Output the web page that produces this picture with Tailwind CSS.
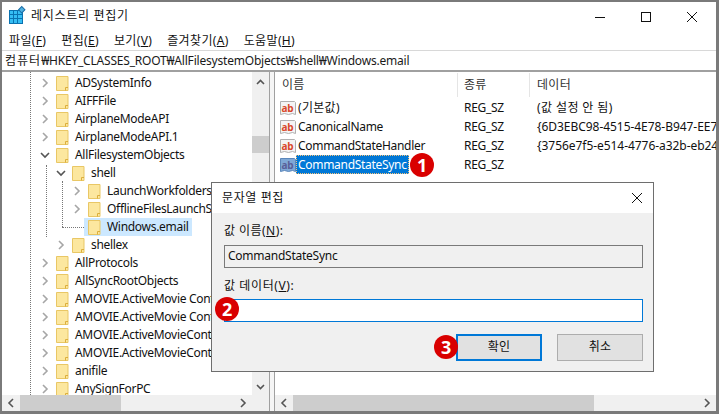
<!DOCTYPE html>
<html lang="ko">
<head>
<meta charset="UTF-8">
<title>레지스트리 편집기</title>
<script src="https://cdn.jsdelivr.net/npm/@tailwindcss/browser@4"></script>
</head>
<body class="bg-white overflow-hidden font-['Noto_Sans','Noto_Sans_CJK_KR',sans-serif] text-[12px] leading-none text-[#111] tracking-[-0.3px]">
<div class="relative w-[719px] h-[414px] overflow-hidden">
  <!-- main window -->
  <div class="flex flex-col w-[719px] h-[414px] border-2 border-b-[3px] border-r-[3px] border-[#7a7a7a] bg-white">
    <!-- title bar -->
    <div class="flex items-center h-[28px] shrink-0">
      <svg class="ml-[7px] w-[16px] h-[16px] overflow-visible" viewBox="0 0 16 16">
        <rect x=".5" y="2.5" width="13" height="13" fill="#35bdf3" stroke="#0a72b0"/>
        <path d="M.5 6.5h13M.5 10.5h13M4.5 2.5v13M8.5 2.5v13" stroke="#0a72b0"/>
        <rect x="10.5" y="-.5" width="4.5" height="4.5" fill="#4fb0e0" stroke="#1b6ea6" transform="rotate(45 12.75 1.75)"/>
      </svg>
      <span class="ml-[6px] text-[12px] tracking-[0.7px]">레지스트리 편집기</span>
      <div class="ml-auto mr-[1px] flex items-center">
        <svg class="w-[46px] h-[28px]" viewBox="0 0 46 28"><path d="M18 15.5h10" stroke="#111"/></svg>
        <svg class="w-[46px] h-[28px]" viewBox="0 0 46 28"><rect x="18.5" y="10.5" width="9" height="9" fill="none" stroke="#111"/></svg>
        <svg class="w-[46px] h-[28px]" viewBox="0 0 46 28"><path d="M18 10l10 10M28 10l-10 10" stroke="#111" fill="none"/></svg>
      </div>
    </div>
    <!-- menu -->
    <div class="flex items-center h-[20px] shrink-0 pl-[7px] pt-[2px] gap-[15px] text-[12px] tracking-[0.35px]">
      <span>파일(<u>F</u>)</span><span>편집(<u>E</u>)</span><span>보기(<u>V</u>)</span><span>즐겨찾기(<u>A</u>)</span><span>도움말(<u>H</u>)</span>
    </div>
    <!-- address bar -->
    <div class="flex items-center h-[22px] shrink-0 pl-[3px] pt-[1px] border-t border-t-[#d8d8d8] border-b-2 border-b-[#a0a0a0] text-[12px] text-[#1a1a1a]"><span class="tracking-[1px]">컴퓨터</span><span class="tracking-[-0.2px]">₩HKEY_CLASSES_ROOT₩AllFilesystemObjects₩shell₩Windows.email</span></div>
    <!-- panes -->
    <div class="flex flex-1 min-h-0">
      <!-- tree pane -->
      <div class="relative flex flex-col w-[267px] shrink-0">
        <div class="flex flex-1 min-h-0">
          <div id="tree" class="relative flex-1 overflow-hidden pt-[2px]"></div>
          <div class="flex flex-col items-center w-[17px] bg-[#f0f0f0]">
            <svg class="w-[17px] h-[17px] mt-[2px]" viewBox="0 0 17 17"><path d="M5 10l3.5-3.5L12 10" fill="none" stroke="#555" stroke-width="1.6"/></svg>
            <div class="w-full h-[17px] mt-[45px] bg-[#cdcdcd]"></div>
            <svg class="w-[17px] h-[17px] mt-auto" viewBox="0 0 17 17"><path d="M5 7l3.5 3.5L12 7" fill="none" stroke="#555" stroke-width="1.6"/></svg>
          </div>
        </div>
        <div class="flex items-center h-[16px] shrink-0 bg-[#f0f0f0]">
          <svg class="w-[18px] h-[16px]" viewBox="0 0 18 16"><path d="M11 4l-4 4 4 4" fill="none" stroke="#555" stroke-width="1.6"/></svg>
          <div class="w-[101px] h-full bg-[#cdcdcd]"></div>
          <svg class="w-[18px] h-[16px] ml-[113px]" viewBox="0 0 18 16"><path d="M7 4l4 4-4 4" fill="none" stroke="#555" stroke-width="1.6"/></svg>
        </div>
      </div>
      <!-- splitter -->
      <div class="w-[6px] shrink-0 bg-[#f5f5f5] border-x border-[#a0a0a0]"></div>
      <!-- list pane -->
      <div class="flex flex-col flex-1 min-w-0">
        <div class="flex flex-1 flex-col min-h-0 overflow-hidden">
          <div class="flex items-center h-[26px] shrink-0 text-[#333] tracking-[0.3px]">
            <div class="w-[183px] shrink-0 pl-[7px] h-[24px] flex items-center border-r border-[#e5e5e5]">이름</div>
            <div class="w-[72px] shrink-0 pl-[6px] h-[24px] flex items-center border-r border-[#e5e5e5]">종류</div>
            <div class="pl-[7px]">데이터</div>
          </div>
          <div id="list"></div>
        </div>
        <div class="flex items-center h-[16px] shrink-0 bg-[#f0f0f0]">
          <svg class="w-[18px] h-[16px]" viewBox="0 0 18 16"><path d="M11 4l-4 4 4 4" fill="none" stroke="#555" stroke-width="1.6"/></svg>
          <div class="w-[301px] h-full bg-[#cdcdcd]"></div>
          <svg class="w-[18px] h-[16px] ml-auto" viewBox="0 0 18 16"><path d="M7 4l4 4-4 4" fill="none" stroke="#555" stroke-width="1.6"/></svg>
        </div>
      </div>
    </div>
  </div>

  <!-- string edit dialog -->
  <div class="absolute left-[211px] top-[182px] w-[443px] h-[190px] flex flex-col border border-[#6e6e6e] bg-[#f0f0f0]">
    <div class="flex items-center justify-between h-[30px] shrink-0 bg-white pl-[10px] pr-[10px]">
      <span class="tracking-[0.6px]">문자열 편집</span>
      <svg class="w-[12px] h-[12px]" viewBox="0 0 12 12"><path d="M1 1l10 10M11 1L1 11" stroke="#111" fill="none"/></svg>
    </div>
    <div class="flex flex-col flex-1 pl-[12px] pr-[10px]">
      <div class="mt-[11px] h-[14px] flex items-center tracking-[0.45px]">값 이름(<u>N</u>):</div>
      <div class="mt-[7px] h-[23px] flex items-center pl-[3px] pb-[2px] border border-[#7a7a7a] tracking-[-0.25px]">CommandStateSync</div>
      <div class="mt-[11px] h-[14px] flex items-center tracking-[0.6px]">값 데이터(<u>V</u>):</div>
      <div class="mt-[6px] h-[23px] border border-[#0078d7] bg-white"></div>
      <div class="flex justify-end gap-[15px] mt-[12px]">
        <button class="w-[86px] h-[27px] pb-[2px] border-2 border-[#0078d7] bg-[#e1e1e1] tracking-[0.3px]">확인</button>
        <button class="w-[86px] h-[27px] pb-[2px] border border-[#adadad] bg-[#e1e1e1] tracking-[0.3px]">취소</button>
      </div>
    </div>
  </div>

  <!-- step badges -->
  <div class="absolute left-[410px] top-[153px] w-[24px] h-[24px] rounded-full bg-[#d90000] text-white font-bold text-[18px] flex items-center justify-center">1</div>
  <div class="absolute left-[215px] top-[297px] w-[24px] h-[24px] rounded-full bg-[#d90000] text-white font-bold text-[18px] flex items-center justify-center">2</div>
  <div class="absolute left-[434px] top-[335px] w-[24px] h-[24px] rounded-full bg-[#d90000] text-white font-bold text-[18px] flex items-center justify-center">3</div>
</div>

<script>
  // tree rows: [label, level, chevron]
  var treeRows = [
    ['ADSystemInfo', 0, 'right'], ['AIFFFile', 0, 'right'], ['AirplaneModeAPI', 0, 'right'],
    ['AirplaneModeAPI.1', 0, 'right'], ['AllFilesystemObjects', 0, 'down'], ['shell', 1, 'down'],
    ['LaunchWorkfolders', 2, 'right'], ['OfflineFilesLaunchS', 2, 'right'], ['Windows.email', 2, ''],
    ['shellex', 1, 'right'], ['AllProtocols', 0, 'right'], ['AllSyncRootObjects', 0, 'right'],
    ['AMOVIE.ActiveMovie Control', 0, 'right'], ['AMOVIE.ActiveMovie Control', 0, 'right'],
    ['AMOVIE.ActiveMovieControl', 0, 'right'], ['AMOVIE.ActiveMovieControl', 0, 'right'],
    ['anifile', 0, 'right'], ['AnySignForPC', 0, 'right']
  ];
  var levelPad = ['pl-[38px]', 'pl-[54px]', 'pl-[70px]'];
  var folder = '<svg class="w-[13px] h-[15px] shrink-0" viewBox="0 0 13 15"><path d="M.5 .5h11.5v14H.5z" fill="#fce79f" stroke="#e9c765"/><path d="M9.5 14.5v-3h2.5" fill="none" stroke="#dcae3c"/></svg>';
  var chevrons = {
    right: '<svg class="w-[10px] h-[10px]" viewBox="0 0 10 10"><path d="M3 1l4 4-4 4" fill="none" stroke="#a6a6a6" stroke-width="1.6"/></svg>',
    down: '<svg class="w-[10px] h-[10px]" viewBox="0 0 10 10"><path d="M1 3l4 4 4-4" fill="none" stroke="#555" stroke-width="1.6"/></svg>',
    '': '<span class="w-[10px]"></span>'
  };
  var tree = document.getElementById('tree');
  var html = '<div class="absolute left-[28px] top-0 bottom-0 border-l border-dotted border-[#777]"></div>'
    + '<div class="absolute left-[44px] top-[93px] h-[72px] border-l border-dotted border-[#777]"></div>'
    + '<div class="absolute left-[60px] top-[109px] h-[46px] border-l border-dotted border-[#777]"></div>'
    + '<div class="absolute left-[60px] top-[155px] w-[22px] border-t border-dotted border-[#777]"></div>';
  treeRows.forEach(function(row) {
    var selected = row[0] === 'Windows.email';
    html += '<div class="relative flex items-center h-[18px] ' + levelPad[row[1]] + '">'
      + '<span class="flex justify-center w-[10px] mr-[2px] ' + (row[2] ? 'bg-white' : '') + '">' + chevrons[row[2]] + '</span>'
      + '<span class="flex items-center h-[18px] pl-[4px] pr-[4px] whitespace-nowrap ' + (selected ? 'bg-[#cce8ff]' : 'bg-white') + '">' + folder
      + '<span class="ml-[6px]">' + row[0] + '</span></span></div>';
  });
  tree.innerHTML = html;

  // list rows: [name, data, selected]
  var listRows = [
    ['<span class="tracking-[0.3px]">(기본값)</span>', '<span class="tracking-[0.4px]">(값 설정 안 됨)</span>', false],
    ['CanonicalName', '{6D3EBC98-4515-4E78-B947-EE7', false],
    ['CommandStateHandler', '{3756e7f5-e514-4776-a32b-eb24', false],
    ['CommandStateSync', '', true]
  ];
  var listHtml = '';
  listRows.forEach(function(row) {
    var icon = '<svg class="w-[16px] h-[16px] shrink-0 ml-[5px]" viewBox="0 0 16 16">'
      + '<path d="M.5 1.5h14l1 1v12l-3-1-4 1-4-1-4 1z" fill="' + (row[2] ? '#7fa8d6' : '#f4f4f4') + '" stroke="' + (row[2] ? '#5b87bb' : '#b0b0b0') + '"/>'
      + '<text x="1.5" y="11.5" font-size="10" font-weight="700" font-family="Noto Sans" fill="' + (row[2] ? '#5a5f98' : '#d9482b') + '">ab</text></svg>';
    listHtml += '<div class="flex items-center h-[19px]">'
      + '<div class="flex items-center w-[183px] shrink-0 overflow-hidden">' + icon
      + '<span class="h-[19px] flex items-center px-[2px] whitespace-nowrap ' + (row[2] ? 'bg-[#0078d7] text-white outline-1 outline-dotted outline-[#f5c27a] -outline-offset-1' : '') + '">' + row[0] + '</span></div>'
      + '<div class="w-[72px] shrink-0 pl-[6px]">REG_SZ</div>'
      + '<div class="pl-[7px] whitespace-nowrap tracking-[-0.05px]">' + row[1] + '</div></div>';
  });
  document.getElementById('list').innerHTML = listHtml;
</script>
</body>
</html>
